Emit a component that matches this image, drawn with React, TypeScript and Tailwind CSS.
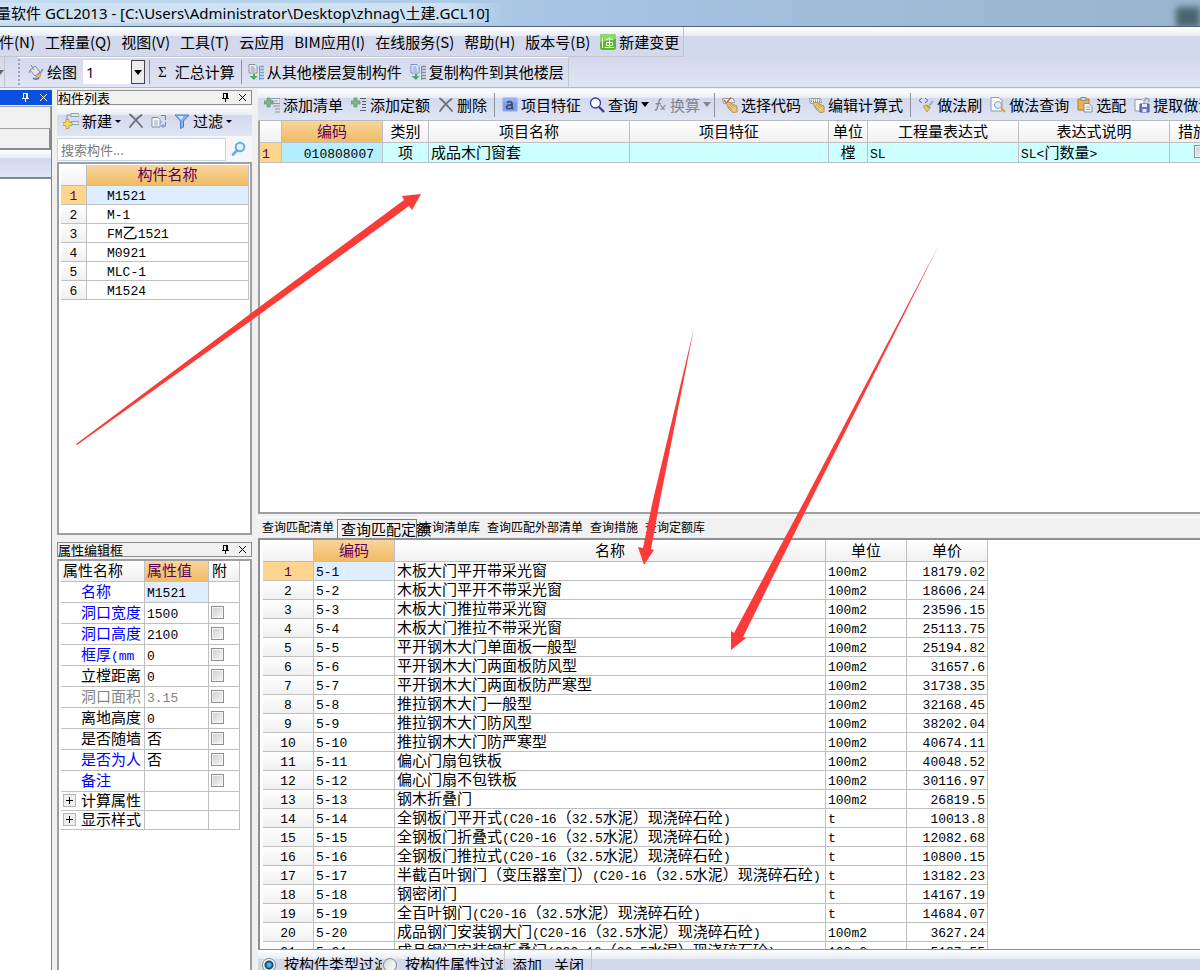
import React, { useState } from 'react'
import clsx from 'clsx'

interface PriceRow {
  name: string
  unit: string
  price: string
}

interface PropertyRow {
  name: string
  value: string
  tone?: 'blue' | 'gray'
  check?: boolean
}

const components = ['M1521', 'M-1', 'FM乙1521', 'M0921', 'MLC-1', 'M1524']

const properties: PropertyRow[] = [
  { name: '名称', value: 'M1521', tone: 'blue' },
  { name: '洞口宽度', value: '1500', tone: 'blue', check: true },
  { name: '洞口高度', value: '2100', tone: 'blue', check: true },
  { name: '框厚(mm', value: '0', tone: 'blue', check: true },
  { name: '立樘距离', value: '0', check: true },
  { name: '洞口面积', value: '3.15', tone: 'gray', check: true },
  { name: '离地高度', value: '0', check: true },
  { name: '是否随墙', value: '否', check: true },
  { name: '是否为人', value: '否', tone: 'blue', check: true },
  { name: '备注', value: '', tone: 'blue', check: true }
]

const concrete = '(C20-16（32.5水泥）现浇碎石砼)'

const prices: PriceRow[] = [
  { name: '木板大门平开带采光窗', unit: '100m2', price: '18179.02' },
  { name: '木板大门平开不带采光窗', unit: '100m2', price: '18606.24' },
  { name: '木板大门推拉带采光窗', unit: '100m2', price: '23596.15' },
  { name: '木板大门推拉不带采光窗', unit: '100m2', price: '25113.75' },
  { name: '平开钢木大门单面板一般型', unit: '100m2', price: '25194.82' },
  { name: '平开钢木大门两面板防风型', unit: '100m2', price: '31657.6' },
  { name: '平开钢木大门两面板防严寒型', unit: '100m2', price: '31738.35' },
  { name: '推拉钢木大门一般型', unit: '100m2', price: '32168.45' },
  { name: '推拉钢木大门防风型', unit: '100m2', price: '38202.04' },
  { name: '推拉钢木大门防严寒型', unit: '100m2', price: '40674.11' },
  { name: '偏心门扇包铁板', unit: '100m2', price: '40048.52' },
  { name: '偏心门扇不包铁板', unit: '100m2', price: '30116.97' },
  { name: '钢木折叠门', unit: '100m2', price: '26819.5' },
  { name: '全钢板门平开式' + concrete, unit: 't', price: '10013.8' },
  { name: '全钢板门折叠式' + concrete, unit: 't', price: '12082.68' },
  { name: '全钢板门推拉式' + concrete, unit: 't', price: '10800.15' },
  { name: '半截百叶钢门（变压器室门）' + concrete, unit: 't', price: '13182.23' },
  { name: '钢密闭门', unit: 't', price: '14167.19' },
  { name: '全百叶钢门' + concrete, unit: 't', price: '14684.07' },
  { name: '成品钢门安装钢大门' + concrete, unit: '100m2', price: '3627.24' },
  { name: '成品钢门安装钢折叠门' + concrete, unit: '100m2', price: '5187.55' }
]

const barBg = 'bg-[linear-gradient(#ffffff,#e6ebf5_30%,#d3d9ec_30%,#e0e5f4)]'
const cell = 'border-r border-b border-[#bfbfbf] p-0 pb-[2px] whitespace-nowrap'
const head = 'font-normal bg-linear-to-b from-white to-[#f0f0f0] text-center'
const headActive = 'font-normal bg-linear-to-b from-[#f9d49b] to-[#efbc62] text-[#5c0057] text-center'

// Latin runs are set in a monospace face, CJK runs in the grid size
const GridText: React.FC<{ children: string }> = ({ children }) => (
  <>
    {children.split(/([\x20-\x7e]+)/).filter(Boolean).map((part, i) =>
      /^[\x20-\x7e]/.test(part) ? (
        <span key={i} className="font-['Liberation_Mono',monospace] text-[13px] leading-[0px]">{part}</span>
      ) : (
        <span key={i}>{part}</span>
      )
    )}
  </>
)

const Svg: React.FC<{ children: React.ReactNode; className?: string }> = ({ children, className = 'h-4 w-4' }) => (
  <svg viewBox="0 0 16 16" fill="none" className={clsx('shrink-0', className)} aria-hidden="true">
    {children}
  </svg>
)

const PinIcon = () => (
  <svg viewBox="0 0 9 9" fill="none" className="h-[9px] w-[9px]" aria-hidden="true">
    <path d="M2.500 0v5M2 .5h5M1 5.500h7M4.500 6v3" stroke="currentColor" />
    <path d="M6 0v5" stroke="currentColor" strokeWidth="2" />
  </svg>
)

const CloseIcon = () => (
  <svg viewBox="0 0 9 9" fill="none" className="h-[9px] w-[9px]" aria-hidden="true">
    <path d="M1 1l7 7M8 1L1 8" stroke="currentColor" />
  </svg>
)

const DeleteIcon = () => (
  <Svg>
    <path d="M2 1.500c4 3 8 8 12 12.500M13.500 2C9 5 5 10 2 14" stroke="#6e6e74" strokeWidth="1.800" strokeLinecap="round" />
  </Svg>
)

const Plus: React.FC<{ fill: string; stroke: string; x: number; y: number }> = ({ fill, stroke, x, y }) => (
  <path
    transform={`translate(${x} ${y})`}
    d="M3 0h3v3h3v3H6v3H3V6H0V3h3z"
    fill={fill}
    stroke={stroke}
    strokeWidth=".7"
  />
)

const AddListIcon = () => (
  <Svg>
    <path d="M7 1.500h9v5H7z" fill="#eef2f8" stroke="#8a99b3" />
    <path d="M8.500 3.500h6M8.500 5h6" stroke="#7183a3" strokeDasharray="1 1" />
    <path d="M9 9h7M11 12h5M11 15h5" stroke="#8d9299" />
    <Plus fill="#7fb58a" stroke="#58936a" x={0} y={1} />
  </Svg>
)

const AddQuotaIcon = () => (
  <Svg>
    <path d="M9 1.500h6M11 4.500h4M11 7.500h4M11 10.500h4M9 13.500h6" stroke="#555c66" />
    <Plus fill="#7fb58a" stroke="#58936a" x={0} y={1} />
  </Svg>
)

const NewIcon = () => (
  <Svg>
    <path d="M8 .5h8v3H8zM8 8.500h8v3H8z" fill="#dce6f0" stroke="#94a5b8" />
    <path d="M4 7V2h4M8 10H6" stroke="#8293a8" />
    <Plus fill="#f6dc62" stroke="#b39322" x={0} y={6.5} />
  </Svg>
)

const CopyIcon = () => (
  <Svg>
    <path d="M1 4.500h6l2 2V14H1z" fill="#fff" stroke="#7b8ca9" />
    <path d="M3 8h4M3 10h4M3 12h4" stroke="#8ba0c4" />
    <path d="M10 2.500h4.500V7M10 9h1M14.500 9v4H11M12.500 11L10.500 13l2 2" stroke="#6882bd" />
  </Svg>
)

const FilterIcon = () => (
  <Svg>
    <path d="M1 2h14l-5.500 6v6l-3 1.500V8z" fill="#86adf0" stroke="#4c79d2" />
    <path d="M3.500 3h6L7.500 7z" fill="#d6e5ff" />
  </Svg>
)

const SearchIcon = () => (
  <Svg>
    <circle cx="6.500" cy="6" r="5" fill="#fafcff" stroke="#3a3aa0" strokeWidth="1.300" />
    <path d="M10 10l5 5" stroke="#3a3aa0" strokeWidth="2.400" />
  </Svg>
)

const FindIcon = () => (
  <Svg>
    <circle cx="9" cy="6" r="4.300" fill="#e2f4ff" stroke="#5eaee8" strokeWidth="2" />
    <path d="M6 9.500l-4 4" stroke="#5eaee8" strokeWidth="2.600" strokeLinecap="round" />
  </Svg>
)

const PaintIcon = () => (
  <Svg>
    <path d="M2 6l5-4 5 6-5 4z" fill="#dfe6ef" stroke="#7d8898" />
    <path d="M3 1l3 5M2 6L1 9" stroke="#7d8898" />
    <path d="M15 5l-4 6" stroke="#8090b5" strokeWidth="1.500" />
    <path d="M10 10c2-1 4 1 2 3-1 1-3 2-5 1 2-1 1-3 3-4z" fill="#e8b64c" stroke="#b38b36" strokeWidth=".5" />
    <path d="M5 14c2 2 5 1 6 0" stroke="#3d74d1" strokeWidth="1.500" />
  </Svg>
)

const FloorCopyIcon: React.FC<{ page: string; bars: string }> = ({ page, bars }) => (
  <Svg>
    <path d="M1 .5h6l2 2V9H1z" fill="#f4f6f9" stroke={page} />
    <path d="M2.500 3h4M2.500 5h5M2.500 7h5" stroke={page} />
    <path d="M11.500 2v14" stroke={bars} />
    <path d="M12 2.500h4M12 5.500h4M12 8.500h4M12 11.500h4M12 14.500h4" stroke={bars} strokeWidth="1.500" />
    <path d="M5 10v2h-3.500L6 16l3.500-4H7v-2z" fill="#4aa866" />
  </Svg>
)

const FeatureIcon = () => (
  <Svg>
    <path d="M1 1h14v13H1z" fill="#7a9ef0" stroke="#8aa8f0" />
    <path d="M1 1h14v4H1z" fill="#94b3f5" />
    <path d="M5 5.500c2-1.500 5-1 5 1V12M10 8c-3-.5-5.500.500-5.500 2.200S8 12.500 10 10.500M10 11.500h1.500" stroke="#444b5c" strokeWidth="1.700" />
  </Svg>
)

const FunctionIcon = () => (
  <Svg className="h-4 w-[14px] text-[#8b8f99]">
    <path d="M10 1.500C7 0 7 4 6 7s-1 8-4 6.500M3 6.500h6" stroke="currentColor" strokeWidth="1.800" />
    <path d="M8.500 8.500c2 0 2 5 5 4.500M14.500 8.500c-2 0-3 4.500-6 4.500" stroke="currentColor" strokeWidth="1.500" />
  </Svg>
)

const HandIcon: React.FC<{ check?: boolean }> = ({ check }) => (
  <Svg>
    <path d="M.500 1.500h11l1 4-11 1z" fill="#f5f5f5" stroke="#9a9a9a" />
    {check ? (
      <path d="M2 3l2.500 3L9 .5" stroke="#d95340" strokeWidth="1.300" />
    ) : (
      <path d="M2 3h9M2 4.500h9" stroke="#808080" strokeDasharray="1 1" />
    )}
    <path d="M4 6l3-1 3 2 5 2v6l-4 .5L7 12z" fill="#e9c983" stroke="#a9803c" strokeWidth=".8" />
    <path d="M7 7l4 4M9 6.500l4 4M6 9l4 4" stroke="#b78e48" strokeWidth=".7" />
  </Svg>
)

const BrushIcon = () => (
  <Svg>
    <path d="M4 1L1 3.500 4 6M7 1l3 2.500L7 6" stroke="#666" />
    <path d="M15 4l-4 5" stroke="#a9a9a9" strokeWidth="2" />
    <path d="M5 9l3-1 4 3-3 4z" fill="#edc65d" stroke="#b08d3c" strokeWidth=".7" />
    <path d="M8 8l4 3" stroke="#909090" strokeWidth="1.500" />
  </Svg>
)

const PageSearchIcon = () => (
  <Svg>
    <path d="M1 .5h8l3 3V14H1z" fill="#fafcff" stroke="#879ab8" />
    <circle cx="8" cy="8" r="3.500" fill="#d9edfb" stroke="#8aa1b8" />
    <path d="M11 11l4 4" stroke="#dc9b3d" strokeWidth="2.200" />
  </Svg>
)

const PasteIcon = () => (
  <Svg>
    <path d="M1 2h11v11H1z" fill="#e9b44c" stroke="#a87c2c" />
    <path d="M4 .5h5v3H4z" fill="#d9dde3" stroke="#7f8791" />
    <path d="M7 6.500h5l3 3V15H7z" fill="#f3f6fb" stroke="#7c8ba4" />
    <path d="M9 10h4M9 12.500h4" stroke="#8ea0bd" />
  </Svg>
)

const ExtractIcon = () => (
  <Svg>
    <path d="M1 2.500h7l2 2V14H1z" fill="#fafcff" stroke="#8d9cb6" />
    <path d="M11 4V1.500M11 1l4 1v3" stroke="#7f8792" />
    <path d="M6 7h9v8H6z" fill="#6d73c4" stroke="#4d539f" />
    <path d="M8 7h5v3H8zM8.500 12h4v3h-4z" fill="#e7e9f8" />
  </Svg>
)

const ChangeIcon = () => (
  <Svg>
    <rect width="16" height="16" rx="2" fill="#5cb531" />
    <path d="M0 2a2 2 0 012-2h12a2 2 0 012 2v3L0 8z" fill="#8ed765" />
    <path d="M2.500 4v10M6 6l3.500-2L13 6M6.500 8.500h6v3h-6zM9.500 5v8M4.500 13.500h10" stroke="#effbe8" />
  </Svg>
)

const DropArrow = () => <span className="border-x-4 border-t-[5px] border-x-transparent border-t-current" />

interface ToolButtonProps {
  icon?: React.ReactNode
  label?: string
  arrow?: boolean
  disabled?: boolean
}

const ToolButton: React.FC<ToolButtonProps> = ({ icon, label, arrow, disabled }) => (
  <button
    type="button"
    disabled={disabled}
    className={clsx('flex shrink-0 items-center gap-[3px] whitespace-nowrap disabled:text-[#85868d]', arrow && '-mr-1')}
  >
    {icon}
    {label && <span>{label}</span>}
    {arrow && <DropArrow />}
  </button>
)

const Separator = () => <span className="-mx-px h-6 w-px shrink-0 bg-[#8f929c]" />

const CheckBox: React.FC<{ label: string }> = ({ label }) => (
  <input
    type="checkbox"
    aria-label={label}
    className="block h-[13px] w-[13px] shrink-0 appearance-none border border-[#8e8f8f] bg-linear-to-br from-[#c9cdd4] to-[#f8f8f8] shadow-[inset_0_0_0_1px_#f4f4f4]"
  />
)

const PanelTitle: React.FC<{ title: string }> = ({ title }) => (
  <div className="flex h-[15px] shrink-0 items-center gap-2 border border-[#8c8c8c] text-[13px] leading-[13px]">
    <h2 className="flex-1">{title}</h2>
    <button type="button" aria-label="固定"><PinIcon /></button>
    <button type="button" aria-label="关闭" className="mr-1"><CloseIcon /></button>
  </div>
)

const MenuBar = () => {
  const menus = ['文件(N)', '工程量(Q)', '视图(V)', '工具(T)', '云应用', 'BIM应用(I)', '在线服务(S)', '帮助(H)', '版本号(B)']
  return (
    <nav className="flex h-[30px] shrink-0 bg-[linear-gradient(#ffffff,#e8ecf6_30%,#d3d9ec_30%)]">
      <div className="-ml-4 flex items-center gap-[10px] border-r border-b border-[#c3c4cc] pr-1">
        {menus.map((menu) => (
          <button key={menu} type="button" className="whitespace-nowrap">{menu}</button>
        ))}
        <ToolButton icon={<ChangeIcon />} label="新建变更" />
      </div>
    </nav>
  )
}

const MainToolbar = () => {
  const [floor, setFloor] = useState('1')
  return (
    <div className="flex h-[31px] shrink-0 border-b border-[#b3b8cd] bg-linear-to-b from-[#d3d9ec] to-[#e0e5f4]">
      <div className="flex w-[5px] items-center overflow-hidden border-r border-[#c3c4cc] text-[#666]">
        <span className="-ml-1 shrink-0 border-x-4 border-t-[5px] border-x-transparent border-t-current" />
      </div>
      <div className="ml-[13px] flex items-center gap-2 border-t border-r border-t-white border-r-[#c3c4cc] pr-1 pb-px">
        <span className="h-[26px] border-l-2 border-dotted border-[#9fa6bb]" />
        <ToolButton icon={<PaintIcon />} label="绘图" />
        <div className="relative -ml-[2px] h-6 w-[62px] bg-white">
          <select
            aria-label="楼层"
            value={floor}
            onChange={(e) => setFloor(e.target.value)}
            className="h-full w-full appearance-none pl-[3px] font-['Open_Sans',sans-serif]"
          >
            <option>1</option>
            <option>2</option>
          </select>
          <span className="pointer-events-none absolute inset-y-0 right-0 flex w-[14px] items-center justify-center border border-[#444] bg-[#ececec]">
            <DropArrow />
          </span>
        </div>
        <span className="-mx-1 h-6 w-px bg-[#8f929c]" />
        <button type="button" className="flex items-center gap-2 pl-1 whitespace-nowrap">
          <span className="font-['Liberation_Serif',serif]">Σ</span>
          汇总计算
        </button>
        <span className="-mx-[2px] h-6 w-px bg-[#8f929c]" />
        <ToolButton icon={<FloorCopyIcon page="#8b8e92" bars="#6aa2d8" />} label="从其他楼层复制构件" />
        <ToolButton icon={<FloorCopyIcon page="#6a8fd0" bars="#8b8e92" />} label="复制构件到其他楼层" />
      </div>
    </div>
  )
}

const DockStub = () => (
  <aside className="mt-px flex w-[52px] shrink-0 flex-col">
    <div className="flex h-[15px] shrink-0 items-center justify-end gap-[9px] bg-[#0a50e0] pr-1 text-white">
      <button type="button" aria-label="固定"><PinIcon /></button>
      <button type="button" aria-label="关闭"><CloseIcon /></button>
    </div>
    <div className="mt-px flex flex-1 flex-col border-r border-[#7f858f]">
      <div className="h-[22px] border-t border-r border-[#a0a0a0]" />
      <div className="h-[22px] border-t border-r-2 border-b-2 border-[#8a8a8a] border-t-[#a0a0a0]" />
      <div className={clsx('h-[29px] border-b-2 border-[#80869a]', barBg)} />
      <div className="flex-1 bg-white" />
    </div>
  </aside>
)

const ComponentList = () => {
  const [selected, setSelected] = useState(0)
  return (
    <section className="flex h-[445px] shrink-0 flex-col">
      <PanelTitle title="构件列表" />
      <div className={clsx('mt-px flex h-[30px] shrink-0 items-center gap-[7px] pl-[6px]', barBg)}>
        <button type="button" className="flex items-center gap-[3px]">
          <NewIcon />
          新建
          <span className="border-x-3 border-t-3 border-x-transparent border-t-black" />
        </button>
        <button type="button" aria-label="删除"><DeleteIcon /></button>
        <button type="button" aria-label="复制"><CopyIcon /></button>
        <button type="button" className="flex items-center gap-[3px]">
          <FilterIcon />
          过滤
          <span className="border-x-3 border-t-3 border-x-transparent border-t-black" />
        </button>
      </div>
      <div className="flex h-[26px] shrink-0 items-center bg-[#f4f6fa] pr-1">
        <input
          type="text"
          aria-label="搜索构件"
          placeholder="搜索构件..."
          className="h-[23px] min-w-0 flex-1 border border-[#c5d3e3] bg-white px-[3px] text-[13px] placeholder:text-[#7a7a7a]"
        />
        <button type="button" aria-label="搜索" className="ml-1 px-px"><FindIcon /></button>
      </div>
      <div className="flex-1 border-2 border-[#9d9fa3] bg-white pt-px pl-[2px]">
        <table className="w-[188px] table-fixed border-separate border-spacing-0">
          <colgroup>
            <col className="w-[26px]" />
            <col />
          </colgroup>
          <thead>
            <tr className="h-[21px] leading-[18px]">
              <th className={clsx(cell, head)} />
              <th className={clsx(cell, headActive)}>构件名称</th>
            </tr>
          </thead>
          <tbody>
            {components.map((name, i) => (
              <tr key={name} className="h-[19px] leading-4" onClick={() => setSelected(i)}>
                <td className={clsx(cell, 'text-center', i === selected ? 'bg-[#ffd48c] text-[#5c0057]' : 'bg-linear-to-b from-white to-[#f0f0f0]')}>
                  <GridText>{String(i + 1)}</GridText>
                </td>
                <td className={clsx(cell, 'pl-5', i === selected && 'bg-[#dfeeff]')}>
                  <GridText>{name}</GridText>
                </td>
              </tr>
            ))}
          </tbody>
        </table>
      </div>
    </section>
  )
}

const PropertyEditor = () => (
  <section className="mt-[7px] flex min-h-0 flex-1 flex-col">
    <PanelTitle title="属性编辑框" />
    <div className="mt-[2px] min-h-0 flex-1 overflow-hidden border-2 border-b-0 border-[#9d9fa3] bg-white pl-[2px]">
      <table className="w-[179px] table-fixed border-separate border-spacing-0">
        <colgroup>
          <col className="w-[84px]" />
          <col className="w-[64px]" />
          <col />
        </colgroup>
        <thead>
          <tr className="h-[21px] leading-[18px]">
            <th className={clsx(cell, head, 'pl-[2px] !text-left')}>属性名称</th>
            <th className={clsx(cell, headActive, 'pl-[2px] !text-left')}>属性值</th>
            <th className={clsx(cell, head, 'pl-[3px] !text-left')}>附</th>
          </tr>
        </thead>
        <tbody>
          {properties.map((row, i) => (
            <tr
              key={row.name}
              className={clsx('h-[21px] leading-[18px]', row.tone === 'gray' && 'text-[#858585]')}
            >
              <td className={clsx(cell, 'pl-5', row.tone === 'blue' && 'text-[#0000ff]')}>
                <GridText>{row.name}</GridText>
              </td>
              <td className={clsx(cell, 'pl-[2px]', i === 0 && 'bg-[#dfeeff]')}>
                <GridText>{row.value}</GridText>
              </td>
              <td className={clsx(cell, 'pl-[2px]')}>{row.check && <CheckBox label={row.name} />}</td>
            </tr>
          ))}
          {['计算属性', '显示样式'].map((group) => (
            <tr key={group} className="h-[19px] leading-4">
              <td className={cell}>
                <div className="flex items-center gap-[5px] pl-[2px]">
                  <button
                    type="button"
                    aria-label={`展开${group}`}
                    className="flex h-[13px] w-[13px] shrink-0 items-center justify-center border border-[#b5b5b5] bg-[#f0f0f0]"
                  >
                    <svg viewBox="0 0 7 7" className="h-[7px] w-[7px]" aria-hidden="true">
                      <path d="M0 3.500h7M3.500 0v7" stroke="#000" />
                    </svg>
                  </button>
                  {group}
                </div>
              </td>
              <td className={cell} />
              <td className={cell} />
            </tr>
          ))}
        </tbody>
      </table>
    </div>
  </section>
)

const ItemToolbar = () => (
  <div className={clsx('flex h-8 shrink-0 items-center gap-2 overflow-hidden border-b border-[#b8bac2] pl-[6px]', barBg)}>
    <ToolButton icon={<AddListIcon />} label="添加清单" />
    <ToolButton icon={<AddQuotaIcon />} label="添加定额" />
    <ToolButton icon={<DeleteIcon />} label="删除" />
    <Separator />
    <ToolButton icon={<FeatureIcon />} label="项目特征" />
    <ToolButton icon={<SearchIcon />} label="查询" arrow />
    <ToolButton icon={<FunctionIcon />} label="换算" arrow disabled />
    <Separator />
    <ToolButton icon={<HandIcon check />} label="选择代码" />
    <ToolButton icon={<HandIcon />} label="编辑计算式" />
    <Separator />
    <ToolButton icon={<BrushIcon />} label="做法刷" />
    <ToolButton icon={<PageSearchIcon />} label="做法查询" />
    <ToolButton icon={<PasteIcon />} label="选配" />
    <ToolButton icon={<ExtractIcon />} label="提取做法" />
  </div>
)

const ItemTable = () => (
  <div className="h-[393px] shrink-0 overflow-hidden border-b-2 border-l-2 border-[#9d9fa3] bg-white">
    <table className="w-[1000px] table-fixed border-separate border-spacing-0">
      <colgroup>
        <col className="w-[22px]" />
        <col className="w-[101px]" />
        <col className="w-[46px]" />
        <col className="w-[201px]" />
        <col className="w-[199px]" />
        <col className="w-[39px]" />
        <col className="w-[151px]" />
        <col className="w-[151px]" />
        <col />
      </colgroup>
      <thead>
        <tr className="h-[22px] leading-[19px]">
          <th className={clsx(cell, head)} />
          <th className={clsx(cell, headActive)}>编码</th>
          {['类别', '项目名称', '项目特征', '单位', '工程量表达式', '表达式说明'].map((title) => (
            <th key={title} className={clsx(cell, head)}>{title}</th>
          ))}
          <th className={clsx(cell, head, 'pl-2 !text-left')}>措施项目</th>
        </tr>
      </thead>
      <tbody>
        <tr className="h-5 bg-[#ccffff] leading-[17px]">
          <td className={clsx(cell, 'bg-[#ffd48c] pl-[2px] text-[#5c0057]')}><GridText>1</GridText></td>
          <td className={clsx(cell, 'bg-[#b5efff] pr-2 text-right')}><GridText>010808007</GridText></td>
          <td className={clsx(cell, 'text-center')}>项</td>
          <td className={clsx(cell, 'pl-[2px]')}>成品木门窗套</td>
          <td className={cell} />
          <td className={clsx(cell, 'text-center')}>樘</td>
          <td className={clsx(cell, 'pl-[2px]')}><GridText>SL</GridText></td>
          <td className={clsx(cell, 'pl-[2px]')}><GridText>{'SL<门数量>'}</GridText></td>
          <td className={clsx(cell, 'pl-6')}><CheckBox label="措施项目" /></td>
        </tr>
      </tbody>
    </table>
  </div>
)

const QueryTabs = () => {
  const tabs = ['查询匹配清单', '查询匹配定额', '查询清单库', '查询匹配外部清单', '查询措施', '查询定额库']
  const [active, setActive] = useState(1)
  return (
    <div role="tablist" className="mt-[3px] flex h-[21px] shrink-0 items-start gap-[7px] border-t border-white pl-1 text-[12px]">
      {tabs.map((tab, i) => (
        <button
          key={tab}
          type="button"
          role="tab"
          aria-selected={i === active}
          onClick={() => setActive(i)}
          className={clsx(
            'mt-px whitespace-nowrap',
            i === active
              ? '-mx-1 h-[19px] w-20 border border-b-0 border-[#7d7d7d] pl-[3px] text-left text-[15px] leading-[18px]'
              : 'leading-4'
          )}
        >
          {tab}
        </button>
      ))}
    </div>
  )
}

const PriceTable = () => {
  const [selected, setSelected] = useState(0)
  return (
    <div className="min-h-0 flex-1 overflow-hidden border-t-2 border-b border-l-2 border-[#8d8f93] bg-white pl-[3px]">
      <table className="w-[725px] table-fixed border-separate border-spacing-0">
        <colgroup>
          <col className="w-[51px]" />
          <col className="w-[81px]" />
          <col className="w-[431px]" />
          <col className="w-[81px]" />
          <col className="w-[81px]" />
        </colgroup>
        <thead>
          <tr className="h-[22px] leading-[19px]">
            <th className={clsx(cell, head)} />
            <th className={clsx(cell, headActive)}>编码</th>
            <th className={clsx(cell, head)}>名称</th>
            <th className={clsx(cell, head)}>单位</th>
            <th className={clsx(cell, head)}>单价</th>
          </tr>
        </thead>
        <tbody>
          {prices.map((row, i) => (
            <tr key={i} className="h-[19px] leading-4" onClick={() => setSelected(i)}>
              <td className={clsx(cell, 'text-center', i === selected ? 'bg-[#ffd48c] text-[#5c0057]' : 'bg-linear-to-b from-white to-[#f0f0f0]')}>
                <GridText>{String(i + 1)}</GridText>
              </td>
              <td className={clsx(cell, 'pl-[2px]', i === selected && 'bg-[#dfeeff]')}>
                <GridText>{`5-${i + 1}`}</GridText>
              </td>
              <td className={clsx(cell, 'pl-[2px]')}><GridText>{row.name}</GridText></td>
              <td className={clsx(cell, 'pl-[2px]')}><GridText>{row.unit}</GridText></td>
              <td className={clsx(cell, 'pr-[2px] text-right')}><GridText>{row.price}</GridText></td>
            </tr>
          ))}
        </tbody>
      </table>
    </div>
  )
}

const FilterBar = () => {
  const [mode, setMode] = useState('按构件类型过滤')
  return (
    <div className="flex h-5 shrink-0 items-start overflow-hidden bg-[linear-gradient(#ffffff,#e6ebf5_45%,#d3d9ec_45%)] pl-1">
      {['按构件类型过滤', '按构件属性过滤'].map((option) => (
        <label key={option} className="flex w-[121px] items-start gap-2 pt-1 leading-5">
          <input
            type="radio"
            name="filter"
            checked={mode === option}
            onChange={() => setMode(option)}
            className="mt-1 h-[14px] w-[14px] shrink-0 appearance-none rounded-full border border-[#7f8790] bg-linear-to-br from-[#d5d8dc] to-white checked:bg-radial checked:from-[#4fb0dd] checked:from-20% checked:via-[#123c5c] checked:via-45% checked:to-white checked:to-60%"
          />
          <span className="w-[98px] overflow-hidden whitespace-nowrap">{option}</span>
        </label>
      ))}
      <div className="flex h-full gap-3 border-x border-[#c3c4cc] px-[7px] pt-[5px] leading-5">
        <button type="button" className="shrink-0">添加</button>
        <button type="button" className="shrink-0">关闭</button>
      </div>
    </div>
  )
}

// Red pointer marks drawn over the window
const Arrows = () => (
  <svg
    viewBox="0 0 1200 970"
    className="pointer-events-none absolute top-0 left-0 h-[970px] w-[1200px]"
    fill="#fb3b38"
    aria-hidden="true"
  >
    <path d="M76 444L250 314 404 200 402 196 421 194 412 210 409 206 252 320 77 445z" />
    <path d="M694 328L653 500 643 548 638 547 644 565 654 550 651 549 660 500z" />
    <path d="M939 245L805 500 734 633 731 631 731 650 746 638 743 637 811 500z" />
  </svg>
)

export default function App() {
  return (
    <div className="relative flex h-screen flex-col overflow-hidden bg-[#f0f0f0] font-['Noto_Sans_CJK_SC',sans-serif] text-[15px] leading-5 text-black">
      <header className="flex h-[27px] shrink-0 items-center justify-between overflow-hidden border-b border-[#50617a] bg-linear-to-r from-[#c3dcf1] via-[#a5c4e2] via-50% to-[#98b4cd]">
        <h1 className="-ml-1 bg-linear-to-r from-[#cfe2f3] from-90% to-transparent pr-3 font-['Noto_Sans','Noto_Sans_CJK_SC',sans-serif] whitespace-nowrap">
          量软件 GCL2013 - [C:\Users\Administrator\Desktop\zhnag\土建.GCL10]
        </h1>
        <span className="mt-2 h-5 w-6 rounded-tl bg-[#4b6570] blur-[3px]" />
      </header>
      <MenuBar />
      <MainToolbar />
      <div className="flex min-h-0 flex-1 pt-px">
        <DockStub />
        <div className="mt-px ml-[5px] flex w-[195px] shrink-0 flex-col">
          <ComponentList />
          <PropertyEditor />
        </div>
        <main className="ml-[6px] flex min-w-0 flex-1 flex-col">
          <ItemToolbar />
          <ItemTable />
          <QueryTabs />
          <PriceTable />
          <FilterBar />
        </main>
      </div>
      <Arrows />
    </div>
  )
}
